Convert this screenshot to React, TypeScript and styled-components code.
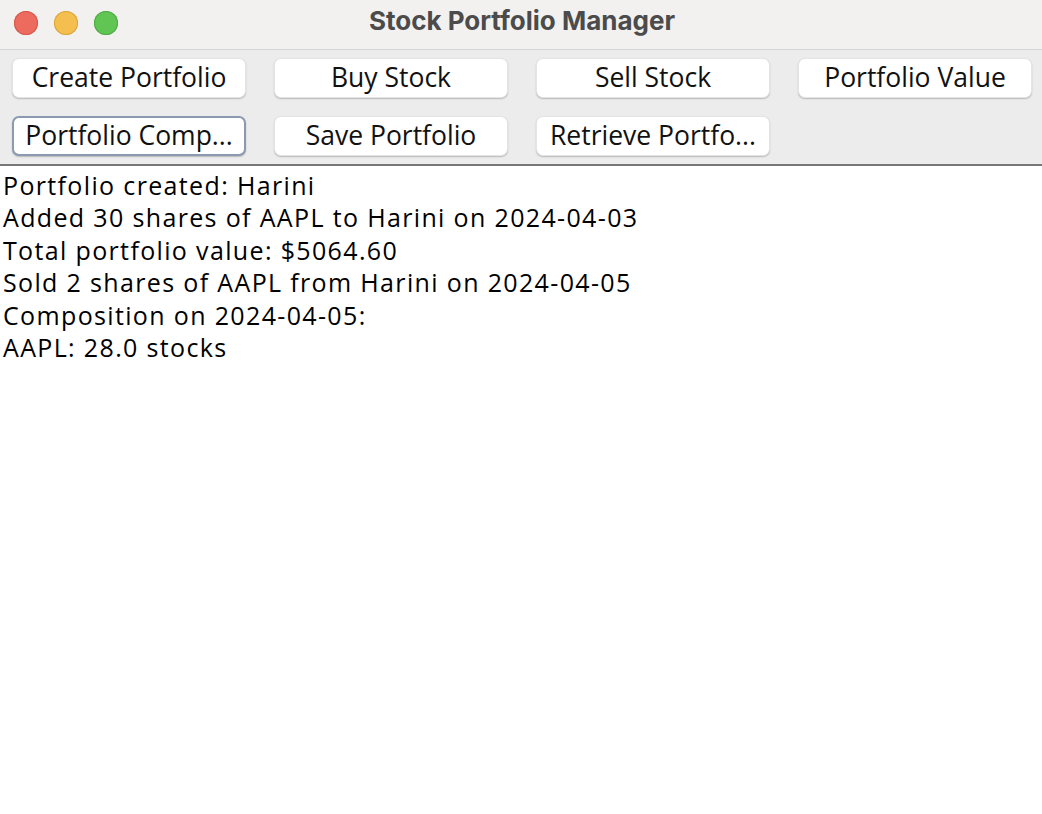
import React from "react";
import styled, { createGlobalStyle } from "styled-components";

const Global = createGlobalStyle`
  html, body { margin: 0; padding: 0; background: #ffffff; }
  body { font-family: "Open Sans", "Liberation Sans", sans-serif; }
`;

const Window = styled.div`
  width: 1042px;
  height: 814px;
  display: flex;
  flex-direction: column;
  background: #ffffff;
  overflow: hidden;
`;

const TitleBar = styled.div`
  height: 49px;
  display: flex;
  align-items: center;
  position: relative;
  background: #f2f1f0;
  border-bottom: 1px solid #d6d6d6;
`;

const Lights = styled.div`
  display: flex;
  gap: 16px;
  padding-left: 14px;
  margin-top: -3px;
`;

const Light = styled.span<{ $c: string; $b: string }>`
  width: 24px;
  height: 24px;
  border-radius: 50%;
  background: ${(p) => p.$c};
  box-shadow: inset 0 0 0 1px ${(p) => p.$b};
`;

const Title = styled.div`
  position: absolute;
  left: 0;
  right: 0;
  top: 0;
  bottom: 0;
  display: flex;
  align-items: center;
  justify-content: center;
  padding-bottom: 8px;
  padding-left: 2px;
  font-family: "Inter", "Liberation Sans", sans-serif;
  font-weight: 700;
  font-size: 26px;
  color: #4b4b4b;
  pointer-events: none;
`;

const Toolbar = styled.div`
  background: #ececec;
  display: grid;
  grid-template-columns: repeat(4, 234px);
  column-gap: 28px;
  row-gap: 18px;
  padding: 8px 10px 8px 12px;
  border-bottom: 2px solid #777777;
`;

const Button = styled.button<{ $focus?: boolean }>`
  height: 40px;
  box-sizing: border-box;
  margin: 0;
  padding: 0 6px 3px;
  background: #ffffff;
  border: ${(p) => (p.$focus ? "2px solid #8b9ab0" : "1px solid #e4e4e4")};
  border-radius: 7px;
  box-shadow: 0 1px 1.5px rgba(0, 0, 0, 0.22);
  font-family: "Open Sans", "Liberation Sans", sans-serif;
  font-size: 26.5px;
  color: #111111;
  white-space: nowrap;
  overflow: hidden;
  display: flex;
  align-items: center;
  justify-content: center;
`;

const Output = styled.div`
  flex: 1;
  padding: 3px 3px;
  font-family: "Open Sans", "Liberation Sans", sans-serif;
  font-size: 25px;
  line-height: 32.4px;
  color: #000000;
  letter-spacing: 1.35px;
`;

const Line = styled.div`
  white-space: pre;
`;

const buttons = [
  "Create Portfolio",
  "Buy Stock",
  "Sell Stock",
  "Portfolio Value",
  "Portfolio Comp...",
  "Save Portfolio",
  "Retrieve Portfo...",
];

const lines = [
  "Portfolio created: Harini",
  "Added 30 shares of AAPL to Harini on 2024-04-03",
  "Total portfolio value: $5064.60",
  "Sold 2 shares of AAPL from Harini on 2024-04-05",
  "Composition on 2024-04-05:",
  "AAPL: 28.0 stocks",
];

export default function App() {
  return (
    <Window>
      <Global />
      <TitleBar>
        <Lights>
          <Light $c="#ed6a5e" $b="#d5564c" />
          <Light $c="#f5bf4f" $b="#d9a43e" />
          <Light $c="#61c554" $b="#4ea946" />
        </Lights>
        <Title>Stock Portfolio Manager</Title>
      </TitleBar>
      <Toolbar>
        {buttons.map((b, i) => (
          <Button key={b} $focus={i === 4}>
            {b}
          </Button>
        ))}
      </Toolbar>
      <Output>
        {lines.map((l) => (
          <Line key={l}>{l}</Line>
        ))}
      </Output>
    </Window>
  );
}
